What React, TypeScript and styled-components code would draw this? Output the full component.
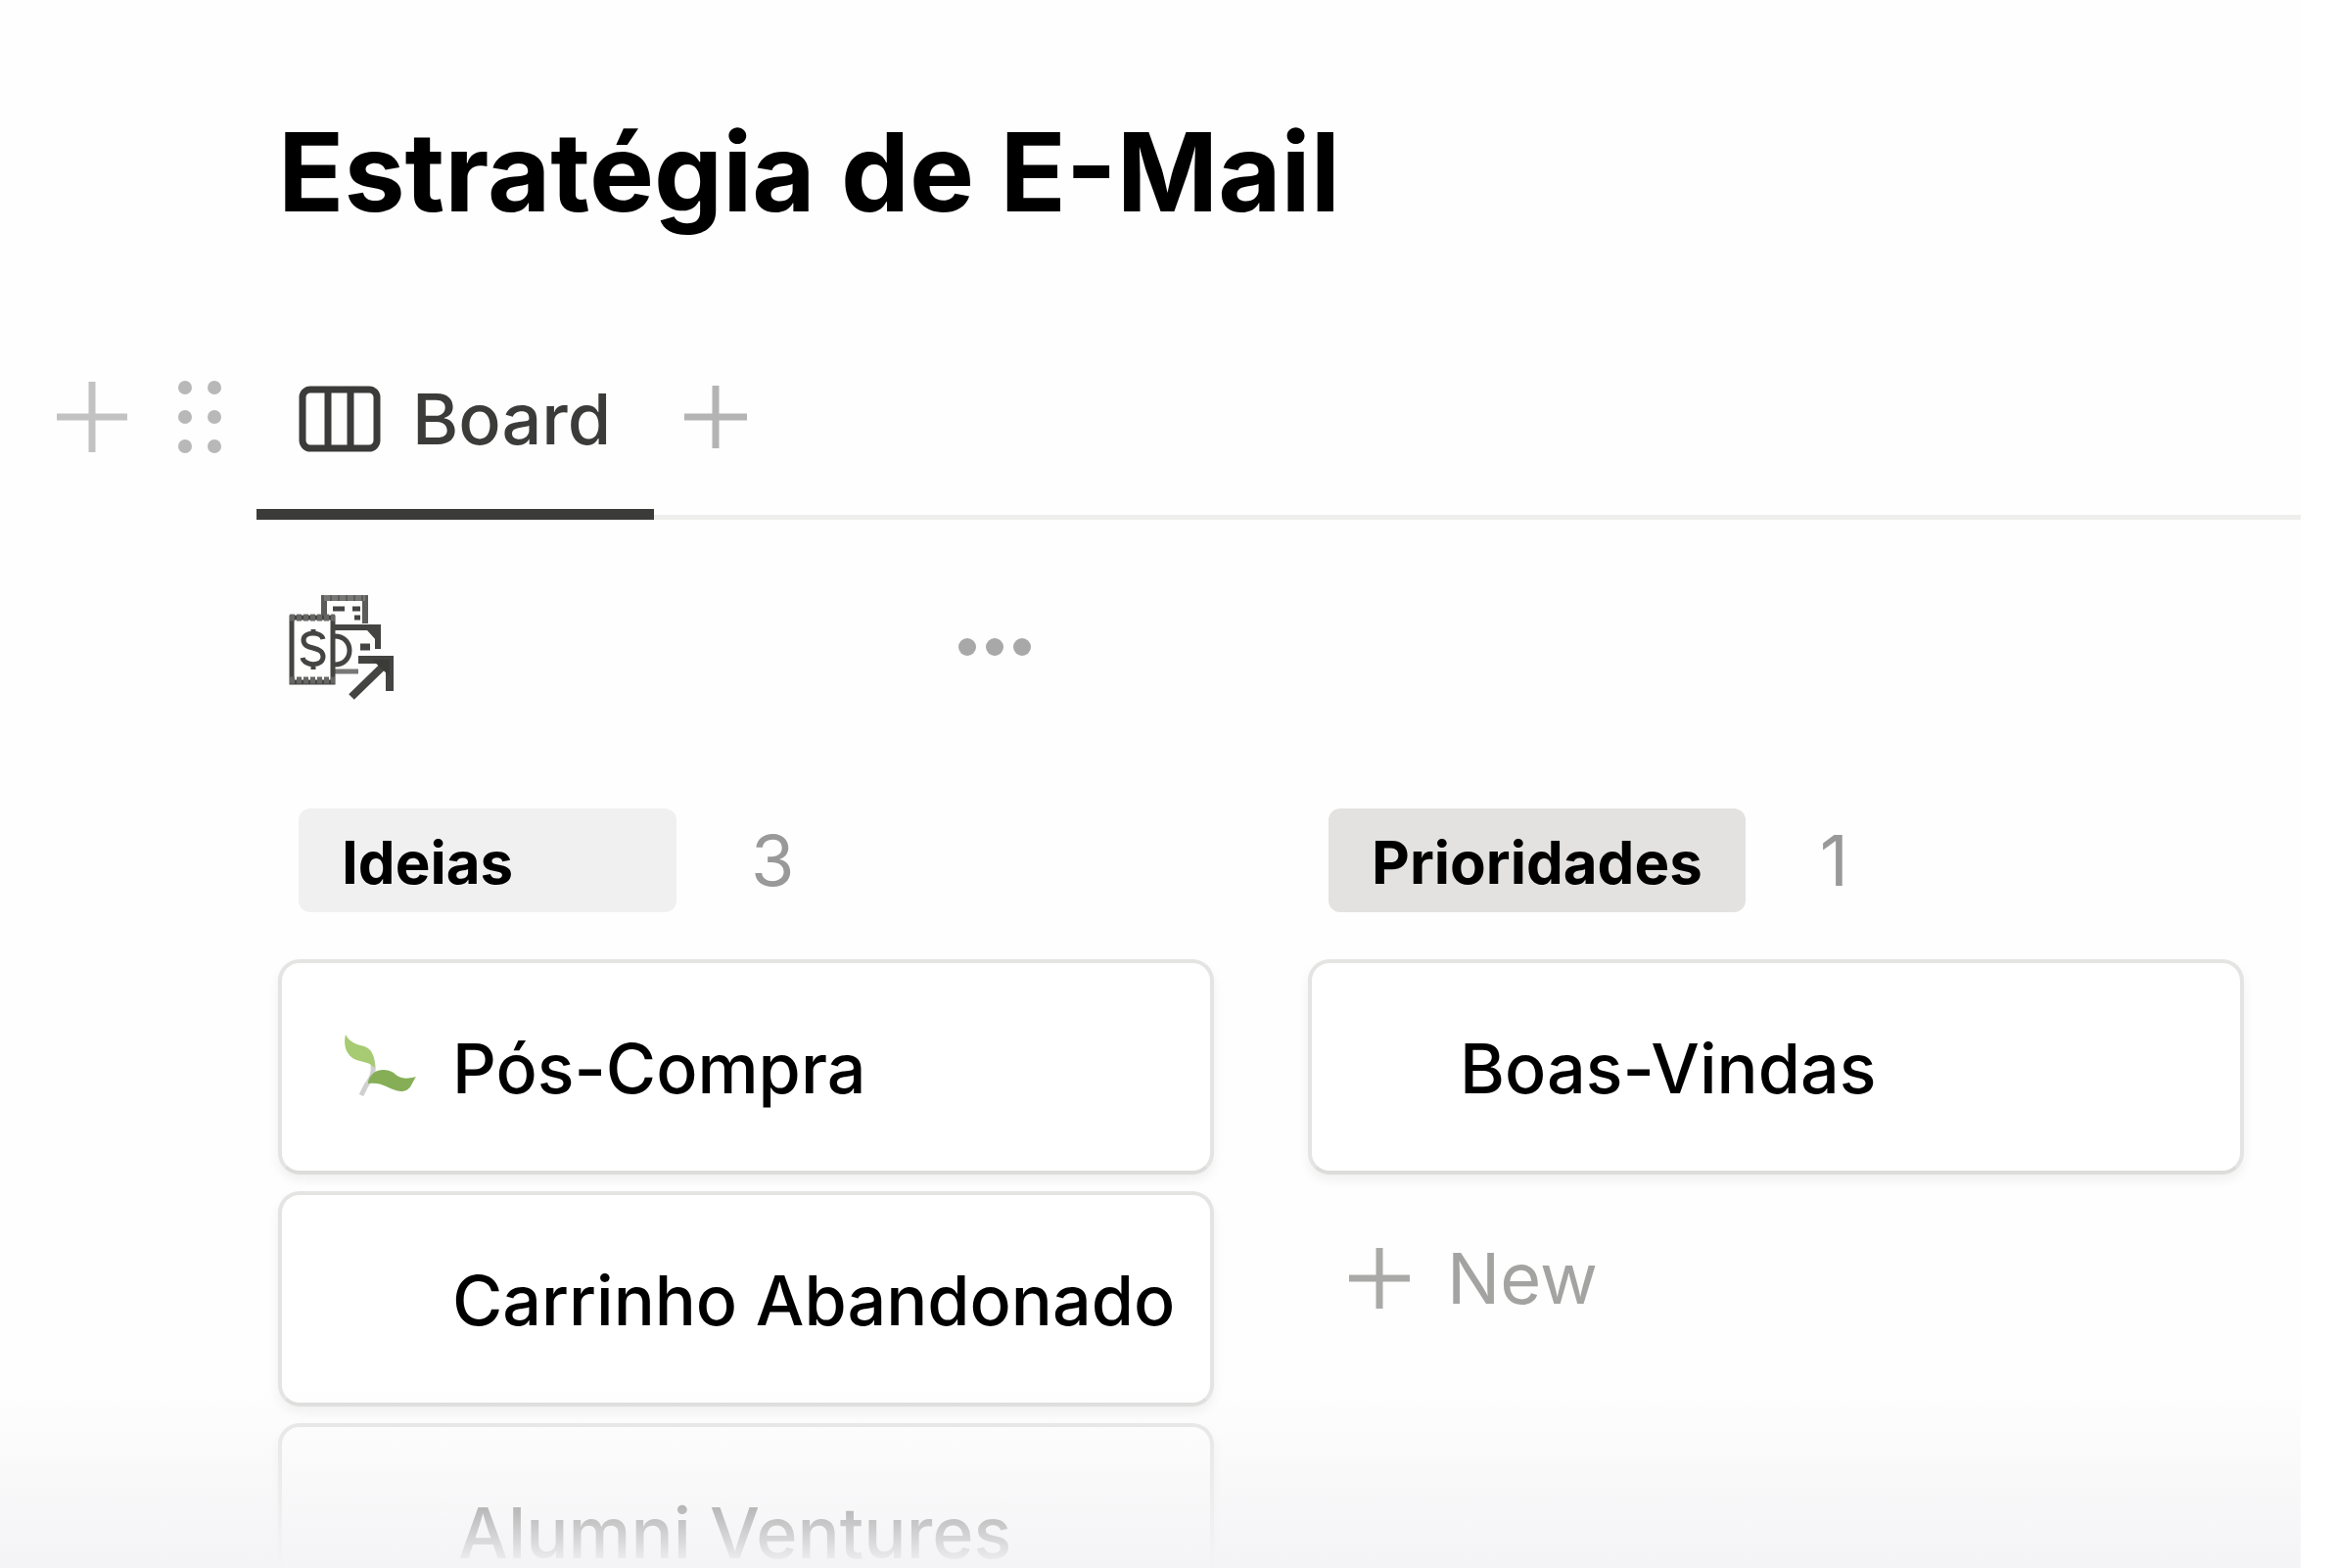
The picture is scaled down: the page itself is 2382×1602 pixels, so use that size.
import React from "react";
import styled, { createGlobalStyle } from "styled-components";

const GlobalStyle = createGlobalStyle`
  *, *::before, *::after { box-sizing: border-box; }
  body { margin: 0; background: #ffffff; }
  button { padding: 0; border: 0; background: none; font: inherit; color: inherit; cursor: pointer; }
  svg { display: block; flex: none; }
`;

const Page = styled.main`
  position: relative;
  height: 100vh;
  margin-right: 32px;
  padding-top: 110px;
  overflow: hidden;
  background: #fefefe;
  color: #000000;
  font-family: Inter, "Liberation Sans", sans-serif;
`;

const Title = styled.h1`
  margin: 0;
  padding-left: 284px;
  font-size: 111px;
  font-weight: 700;
  line-height: 132px;
`;

const ViewBar = styled.div`
  display: flex;
  align-items: stretch;
  height: 181px;
  margin-top: 108px;
`;

const BlockHandles = styled.div`
  display: flex;
  align-items: center;
  gap: 50px;
  width: 262px;
  padding: 0 0 30px 58px;
`;

const Tabs = styled.nav`
  display: flex;
  flex: 1;
  gap: 31px;
  box-shadow: inset 0 -5px 0 #eeeeed;
`;

const Tab = styled.button`
  display: flex;
  align-items: center;
  gap: 32px;
  padding: 0 44px 14px 43px;
  border-bottom: 11px solid #3b3b3a;
  color: #3b3b3a;
  font-size: 72px;
  font-weight: 500;
  line-height: 88px;
`;

const IconButton = styled.button<{ $lift?: number }>`
  display: flex;
  align-items: center;
  padding-bottom: ${(p) => p.$lift ?? 0}px;
`;

const SourceRow = styled.div`
  display: flex;
  align-items: center;
  justify-content: space-between;
  width: 762px;
  height: 116px;
  margin-top: 72px;
  padding-left: 292px;
  box-sizing: content-box;
`;

const Board = styled.div`
  display: grid;
  grid-template-columns: repeat(2, minmax(0, 1fr));
  gap: 96px;
  margin-top: 107px;
  padding: 0 58px 0 284px;
`;

const Column = styled.section`
  display: flex;
  flex-direction: column;
  gap: 17px;
`;

const ColumnHead = styled.header`
  display: flex;
  align-items: center;
  gap: 76px;
  margin-bottom: 31px;
  padding-left: 21px;
`;

const Badge = styled.h2<{ $tone: string }>`
  min-width: 386px;
  margin: 0;
  padding: 18px 44px 14px;
  border-radius: 12px;
  background: ${(p) => p.$tone};
  font-size: 60px;
  font-weight: 700;
  line-height: 74px;
`;

const Count = styled.span`
  color: #999999;
  font-size: 72px;
  font-weight: 400;
  line-height: 88px;
`;

const Card = styled.article<{ $muted?: boolean; $indent: number }>`
  display: flex;
  align-items: center;
  height: 220px;
  padding: 4px 0 0 ${(p) => p.$indent}px;
  border: 4px solid #e4e4e3;
  border-bottom-color: #dcdcdb;
  border-radius: 22px;
  background: #ffffff;
  box-shadow: 0 6px 12px rgba(15, 15, 15, 0.06);
  color: ${(p) => (p.$muted ? "#3b3b3a" : "#000000")};
  font-size: ${(p) => (p.$muted ? 72 : 70)}px;
  font-weight: 500;
  line-height: 70px;
  white-space: nowrap;
`;

const CardIcon = styled.span`
  display: flex;
  width: 112px;
`;

const NewButton = styled.button`
  display: flex;
  align-items: center;
  gap: 38px;
  margin: 45px 0 0 42px;
  color: #a3a3a2;
  font-size: 72px;
  line-height: 88px;
`;

const Fade = styled.div`
  position: absolute;
  inset: auto 0 0 0;
  height: 188px;
  background: linear-gradient(rgba(244, 244, 246, 0), #f4f4f6);
  pointer-events: none;
`;

const Plus = ({ size, color, stroke = 7 }: { size: number; color: string; stroke?: number }) => (
  <svg width={size} height={size} viewBox={`0 0 ${size} ${size}`} aria-hidden="true">
    <path d={`M${size / 2} 0V${size}M0 ${size / 2}H${size}`} stroke={color} strokeWidth={stroke} />
  </svg>
);

const Grip = () => (
  <svg width="48" height="76" viewBox="0 0 48 76" fill="#b8b8b8" aria-hidden="true">
    {[8, 38, 68].map((y) => (
      <g key={y}>
        <circle cx="9" cy={y} r="7" />
        <circle cx="39" cy={y} r="7" />
      </g>
    ))}
  </svg>
);

const BoardGlyph = () => (
  <svg width="84" height="68" viewBox="0 0 84 68" fill="none" stroke="#3b3b3a" strokeWidth="7" aria-hidden="true">
    <rect x="4" y="4" width="76" height="60" rx="8" />
    <path d="M30 4V64M53 4V64" />
  </svg>
);

const Ellipsis = () => (
  <svg width="76" height="20" viewBox="0 0 76 20" fill="#a8a8a8" aria-hidden="true">
    <circle cx="10" cy="10" r="9" />
    <circle cx="38" cy="10" r="9" />
    <circle cx="66" cy="10" r="9" />
  </svg>
);

const InvoiceGlyph = () => (
  <svg width="112" height="112" viewBox="0 0 112 112" fill="none" stroke="#444443" aria-hidden="true">
    <path d="M39 28V6H81V32" stroke="#5c5c5b" strokeWidth="6" />
    <path d="M39 6H81" stroke="#777776" strokeWidth="6" strokeDasharray="6 2" />
    <path d="M48 17H60M68 17H76M70 26H76" strokeWidth="5" />
    <path d="M50 36H94V58" strokeWidth="6" />
    <path d="M84 35L94 46" strokeWidth="7" />
    <path d="M50 45C70 45 70 74 50 74" strokeWidth="5" />
    <path d="M76 56H86" strokeWidth="7" />
    <path d="M50 81H74" stroke="#777776" strokeWidth="5" />
    <rect x="6" y="26" width="42" height="66" fill="#ffffff" strokeWidth="5" />
    <path d="M4 26H50M4 90H50" stroke="#666665" strokeWidth="7" strokeDasharray="5 2" />
    <path d="M38 48C36 40 18 40 18 49C18 60 38 54 38 66C38 76 19 76 17 67M28 38V44M28 72V79" strokeWidth="5" />
    <path d="M74 69H106V101M104 71L67 107" strokeWidth="8" />
    <path d="M88 69H106V86Z" fill="#3b3b3a" stroke="none" />
  </svg>
);

const Leaves = () => (
  <svg width="76" height="74" viewBox="0 0 76 74" aria-hidden="true">
    <path d="M29 26C34 38 30 46 24 54L19 64" fill="none" stroke="#cfcfcf" strokeWidth="5" />
    <path d="M3 2C7 10 14 12 22 14C30 17 33 24 33 36C25 28 18 31 10 26C2 20 1 10 3 2Z" fill="#a6cb72" />
    <path d="M26 50C30 36 44 36 52 41C58 47 64 48 75 45C70 52 70 60 59 60C46 58 42 50 26 52Z" fill="#86ae57" />
  </svg>
);

export default function App() {
  return (
    <>
      <GlobalStyle />
      <Page>
        <Title>Estratégia de E-Mail</Title>
        <ViewBar>
          <BlockHandles>
            <IconButton aria-label="Add block">
              <Plus size={72} color="#c2c2c2" />
            </IconButton>
            <IconButton aria-label="Drag block">
              <Grip />
            </IconButton>
          </BlockHandles>
          <Tabs>
            <Tab aria-current="page">
              <BoardGlyph />
              Board
            </Tab>
            <IconButton aria-label="Add view" $lift={30}>
              <Plus size={64} color="#b4b4b4" />
            </IconButton>
          </Tabs>
        </ViewBar>
        <SourceRow>
          <InvoiceGlyph />
          <IconButton aria-label="More options">
            <Ellipsis />
          </IconButton>
        </SourceRow>
        <Board>
          <Column>
            <ColumnHead>
              <Badge $tone="#f0f0f0">Ideias</Badge>
              <Count>3</Count>
            </ColumnHead>
            <Card $indent={62}>
              <CardIcon>
                <Leaves />
              </CardIcon>
              Pós-Compra
            </Card>
            <Card $indent={174}>Carrinho Abandonado</Card>
            <Card $indent={180} $muted>
              Alumni Ventures
            </Card>
          </Column>
          <Column>
            <ColumnHead>
              <Badge $tone="#e3e2e0">Prioridades</Badge>
              <Count>1</Count>
            </ColumnHead>
            <Card $indent={151}>Boas-Vindas</Card>
            <NewButton>
              <Plus size={62} color="#a9a9a8" />
              New
            </NewButton>
          </Column>
        </Board>
        <Fade />
      </Page>
    </>
  );
}
